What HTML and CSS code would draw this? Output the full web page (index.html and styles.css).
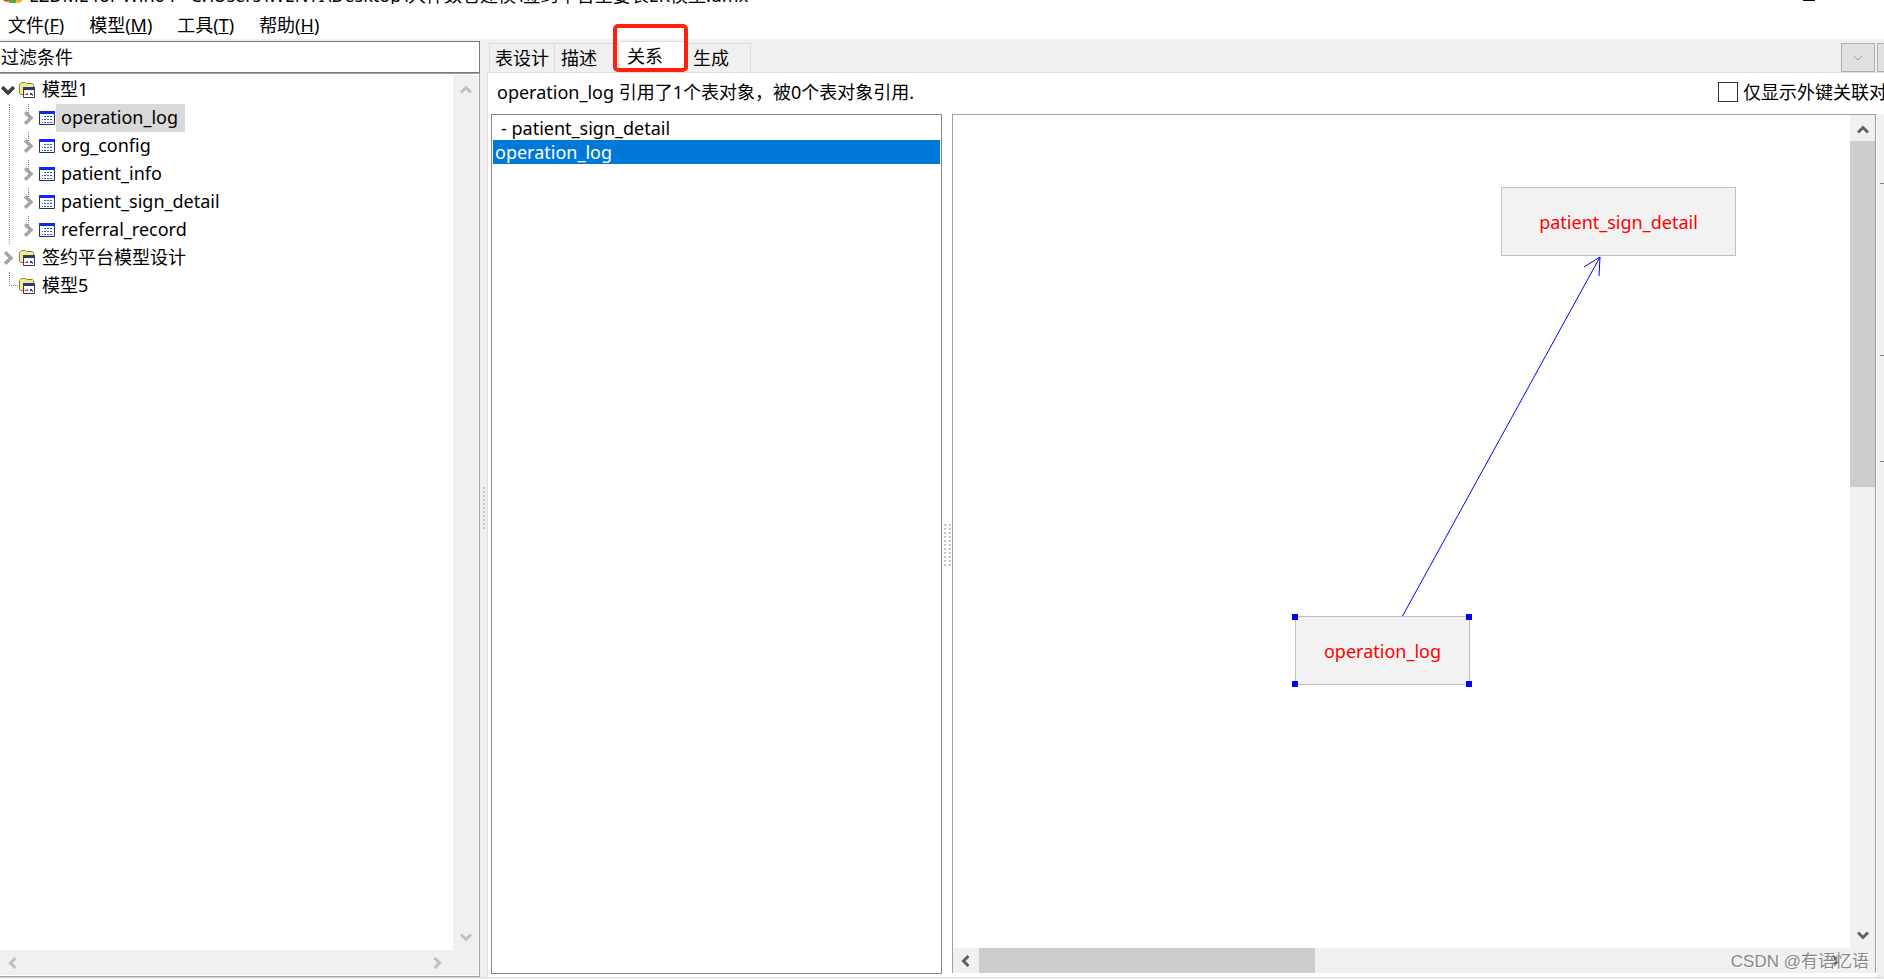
FILE: index.html
```html
<!DOCTYPE html>
<html lang="zh-CN">
<head>
<meta charset="utf-8">
<title>EZDML</title>
<link rel="stylesheet" href="styles.css">
</head>
<body>
<svg class="defs" aria-hidden="true">
  <symbol id="model" viewBox="0 0 16 16">
    <path d="M.5 11.500V2.500l2-2h4l1 1h6l1 1v3H5v7H2z" fill="#f3ec8c" stroke="#8a8430"/>
    <path d="M4.500 5.500h11v10h-11z" fill="#fff" stroke="#3a3a58"/>
    <path d="M4 5h12v3H4z" fill="#2a3a7c"/>
    <path d="M6 12h2v-1h1v2H6z" fill="#e02020"/><path d="M11 11h2v2h-2z" fill="#2040e0"/><path d="M13 12h1v2h-1z" fill="#20a040"/>
  </symbol>
  <symbol id="table" viewBox="0 0 16 14">
    <path d="M.5.5h15v13H.5z" fill="#fff" stroke="#24324f"/>
    <path d="M0 0h16v3H0z" fill="#0a2cf0"/>
    <path d="M3 11.500h1M5 11.500h2M8 11.500h2M11 11.500h2M3 8.500h1M5 8.500h2M8 8.500h2M11 8.500h2M5 5.500h2M8 5.500h2M11 5.500h2" stroke="#3355c8"/>
  </symbol>
  <symbol id="chev" viewBox="0 0 12 12"><path d="M1 3.500l5 5 5-5" fill="none" stroke="currentColor" stroke-width="3"/></symbol>
</svg>
<div class="app">
  <header class="titlebar">
    <svg class="logo" viewBox="0 0 20 20"><circle cx="5" cy="13" r="5" fill="#e8503a"/><circle cx="16" cy="14" r="5" fill="#f0b030"/><rect x="7" y="9" width="7" height="10" fill="#4fae2e"/></svg>
    <span>EZDML for Win64 - C:\Users\WENYI\Desktop\大件数仓建模\签约平台主要表ER模型.dmx</span>
    <i class="minimize"></i>
  </header>
  <nav class="menu">
    <button>文件(<u>F</u>)</button><button>模型(<u>M</u>)</button><button>工具(<u>T</u>)</button><button>帮助(<u>H</u>)</button>
  </nav>
  <main class="work">
    <aside class="side">
      <input class="filter" type="text" aria-label="过滤条件" value="过滤条件">
      <div class="treebox">
        <ul class="tree">
          <li class="root"><div class="node"><svg class="tw open"><use href="#chev"/></svg><svg class="ico"><use href="#model"/></svg><span>模型1</span></div>
            <ul class="kids">
              <li class="node"><svg class="tw"><use href="#chev"/></svg><svg class="tab-ico"><use href="#table"/></svg><span class="sel">operation_log</span></li>
              <li class="node"><svg class="tw"><use href="#chev"/></svg><svg class="tab-ico"><use href="#table"/></svg><span>org_config</span></li>
              <li class="node"><svg class="tw"><use href="#chev"/></svg><svg class="tab-ico"><use href="#table"/></svg><span>patient_info</span></li>
              <li class="node"><svg class="tw"><use href="#chev"/></svg><svg class="tab-ico"><use href="#table"/></svg><span>patient_sign_detail</span></li>
              <li class="node"><svg class="tw"><use href="#chev"/></svg><svg class="tab-ico"><use href="#table"/></svg><span>referral_record</span></li>
            </ul>
          </li>
          <li class="node"><svg class="tw"><use href="#chev"/></svg><svg class="ico"><use href="#model"/></svg><span>签约平台模型设计</span></li>
          <li class="node"><i class="elbow"></i><svg class="ico"><use href="#model"/></svg><span>模型5</span></li>
        </ul>
        <div class="vbar off"><svg class="up"><use href="#chev"/></svg><svg><use href="#chev"/></svg></div>
        <div class="hbar off"><svg class="left"><use href="#chev"/></svg><svg class="right"><use href="#chev"/></svg></div>
      </div>
    </aside>
    <div class="split"><i class="grip"></i></div>
    <section class="content">
      <div class="tabs">
        <button>表设计</button><button>描述</button><button class="active">关系</button><button>生成</button>
        <span class="fill"></span>
        <button class="drop" aria-label="更多"><svg viewBox="0 0 12 12"><path d="M2 4l4 4 4-4" fill="none" stroke="#a0a0a0"/></svg></button><button class="drop cut" aria-label="关闭"></button>
      </div>
      <div class="page">
        <div class="info"><span>operation_log 引用了1个表对象，被0个表对象引用.</span>
          <label class="check"><input type="checkbox">仅显示外键关联对</label></div>
        <div class="panes">
          <ul class="list"><li class="ref">- patient_sign_detail</li><li class="on">operation_log</li></ul>
          <div class="split2"><i class="grip"></i><i class="grip"></i></div>
          <div class="canvas">
            <div class="draw">
              <svg class="link" width="200" height="362"><path d="M1 361L199 1M183 11L199 1L198 20" fill="none" stroke="#00f"/></svg>
              <div class="entity detail">patient_sign_detail</div>
              <div class="entity log">operation_log<i class="h tl"></i><i class="h tr"></i><i class="h bl"></i><i class="h br"></i></div>
            </div>
            <div class="vbar"><svg class="up"><use href="#chev"/></svg><i class="thumb"></i><svg><use href="#chev"/></svg></div>
            <div class="hbar"><svg class="left"><use href="#chev"/></svg><i class="thumb"></i><svg class="right"><use href="#chev"/></svg></div>
          </div>
          <div class="edge"><i></i><i></i><i></i></div>
        </div>
      </div>
    </section>
  </main>
  <footer class="status"></footer>
  <div class="watermark">CSDN @有语忆语</div>
</div>
</body>
</html>
```
FILE: styles.css
```css
* { box-sizing: border-box; }
body { margin: 0; font: 18px/24px "Noto Sans", "Noto Sans CJK SC", sans-serif; color: #000; background: #f0f0f0; }
button, input { font: inherit; color: inherit; }
button { border: 0; background: none; padding: 0; white-space: nowrap; }
ul { list-style: none; margin: 0; padding: 0; }
i { display: block; }
svg { flex: none; }
.defs { position: absolute; width: 0; height: 0; }
.app { position: relative; display: flex; flex-direction: column; height: 100vh; overflow: hidden; }
.titlebar { display: flex; align-items: flex-end; gap: 7px; height: 4px; padding-left: 2px; overflow: hidden; background: #fff; white-space: nowrap; flex: none; }
.titlebar span { margin-bottom: -3px; }
.logo { width: 20px; height: 20px; }
.minimize { width: 12px; height: 1px; margin: 0 69px 3px auto; background: #000; }
.menu { display: flex; gap: 25px; height: 35px; padding: 7px 8px 0; background: #fff; flex: none; }
.work { display: flex; flex: 1; min-height: 0; }
.side { display: flex; flex-direction: column; width: 480px; flex: none; padding-top: 2px; }
.filter { height: 32px; border: 1px solid #7a7a7a; border-left: 0; padding: 0 1px 3px; background: #fff; outline: 0; border-radius: 0; flex: none; width: 100%; }
.treebox { flex: 1; min-height: 0; display: grid; grid-template: 1fr 25px / 1fr 25px; border: 1px solid #a0a0a5; border-left: 0; padding: 1px 1px 1px 0; background: #fff; }
.tree { padding-top: 1px; }
.node { display: flex; align-items: center; height: 28px; padding-left: 1px; }
.node span { height: 28px; line-height: 26px; padding: 0 5px 0 6px; }
.tree > .node span, .root > .node span { padding-left: 7px; }
.node .sel { background: #d9d9d9; padding: 0 7px 0 5px; margin-left: 1px; }
.tw { width: 14px; height: 14px; margin-right: 4px; color: #a6a6a6; transform: rotate(-90deg); }
.tw.open { color: #404040; transform: none; }
.ico { width: 16px; height: 16px; }
.tab-ico { width: 16px; height: 14px; }
.kids { margin-left: 9px; border-left: 1px dotted #808080; padding-left: 10px; }
.kids .node { background: repeating-linear-gradient(#808080 0 1px, transparent 1px 2px) no-repeat 8px 0 / 1px 12px; }
.elbow { width: 9px; height: 14px; margin: -14px 1px 0 8px; border: dotted #808080; border-width: 0 0 1px 1px; }
.vbar, .hbar { display: flex; align-items: center; background: #f0f0f0; color: #606060; }
.vbar { flex-direction: column; padding: 9px 0 7px; }
.vbar svg, .hbar svg { width: 12px; height: 12px; }
.off { color: #bfbfbf; }
.vbar svg:last-child { margin-top: auto; }
.hbar svg:last-child { margin-left: auto; }
.treebox .hbar { grid-column: 1 / 3; padding: 0 35px 0 7px; }
.up { transform: rotate(180deg); }
.left { transform: rotate(90deg); }
.right { transform: rotate(-90deg); }
.split { width: 7px; flex: none; display: flex; align-items: center; justify-content: center; }
.grip { width: 2px; height: 43px; background: repeating-linear-gradient(#c4c4c4 0 2px, transparent 2px 4px); }
.content { flex: 1; min-width: 0; display: flex; flex-direction: column; }
.tabs { display: flex; align-items: flex-end; height: 34px; padding-left: 2px; flex: none; border-bottom: 1px solid #dcdcdc; }
.tabs button { height: 29px; border: 1px solid #dcdcdc; border-bottom: 0; border-left-width: 0; padding: 0 5px; }
.tabs button:first-child { border-left-width: 1px; }
.tabs button:nth-child(2) { width: 64px; text-align: left; padding-left: 6px; }
.tabs .active { position: relative; width: 69px; height: 31px; background: #fff; padding: 0 0 2px 8px; text-align: left; }
.tabs .active::after { content: ""; position: absolute; inset: -18px -1px 0 -6px; border: 4px solid #ff2010; border-radius: 5px; }
.tabs button:nth-child(4) { width: 63px; text-align: left; }
.fill { flex: 1; }
.tabs .drop { display: flex; align-items: center; justify-content: center; width: 34px; padding: 0; border: 1px solid #adadad; background: #e1e1e1; margin-right: 2px; }
.drop svg { width: 12px; height: 12px; }
.tabs .cut { width: 7px; margin: 0; border-right: 0; }
.page { flex: 1; min-height: 0; display: flex; flex-direction: column; background: #fff; border-left: 1px solid #dcdcdc; }
.info { display: flex; justify-content: space-between; align-items: center; height: 41px; padding: 0 0 3px 9px; white-space: nowrap; flex: none; }
.check { display: flex; align-items: center; gap: 5px; width: 166px; }
.check input { appearance: none; width: 20px; height: 20px; border: 1px solid #333; margin: 0; flex: none; }
.panes { flex: 1; min-height: 0; display: flex; padding-left: 3px; }
.list { width: 451px; flex: none; border: 1px solid #828790; padding: 1px; margin-bottom: 3px; }
.list li { height: 24px; line-height: 24px; padding-left: 2px; }
.list .ref { padding-left: 8px; }
.list .on { background: #0078d7; color: #fff; }
.split2 { width: 10px; flex: none; display: flex; align-items: center; justify-content: center; gap: 3px; }
.canvas { flex: 1; min-width: 0; display: grid; grid-template: 1fr 25px / 1fr 25px; border: 1px solid #a0a0a0; border-bottom: 0; margin-bottom: 4px; }
.draw { position: relative; overflow: hidden; }
.entity { position: absolute; height: 69px; display: flex; align-items: center; justify-content: center; border: 1px solid #bfbfbf; background: #f2f2f2; color: #f00; }
.detail { left: 548px; top: 72px; width: 235px; }
.log { left: 342px; top: 501px; width: 175px; }
.link { position: absolute; left: 448px; top: 141px; }
.h { position: absolute; width: 6px; height: 6px; background: #00f; }
.tl, .bl { left: -4px; }
.tr, .br { right: -3px; }
.tl, .tr { top: -3px; }
.bl, .br { bottom: -3px; }
.canvas .vbar .thumb { width: 100%; height: 346px; background: #cdcdcd; margin-top: 5px; }
.canvas .hbar { grid-column: 1 / 3; padding: 0 34px 0 7px; }
.canvas .hbar .thumb { width: 336px; height: 100%; background: #cdcdcd; margin-left: 7px; }
.edge { width: 8px; flex: none; background: #f0f0f0; border-left: 1px solid #fff; padding: 69px 0 0 3px; }
.edge i { height: 1px; background: #808080; }
.edge i:nth-child(2) { margin-top: 171px; }
.edge i:nth-child(3) { margin-top: 105px; }
.status { height: 2px; border-top: 1px solid #dcdcdc; flex: none; }
.watermark { position: absolute; right: 15px; bottom: 5px; font: 17px/24px "Liberation Sans", "Noto Sans CJK SC", sans-serif; color: #888; text-shadow: 1px 1px #fff; }
```
